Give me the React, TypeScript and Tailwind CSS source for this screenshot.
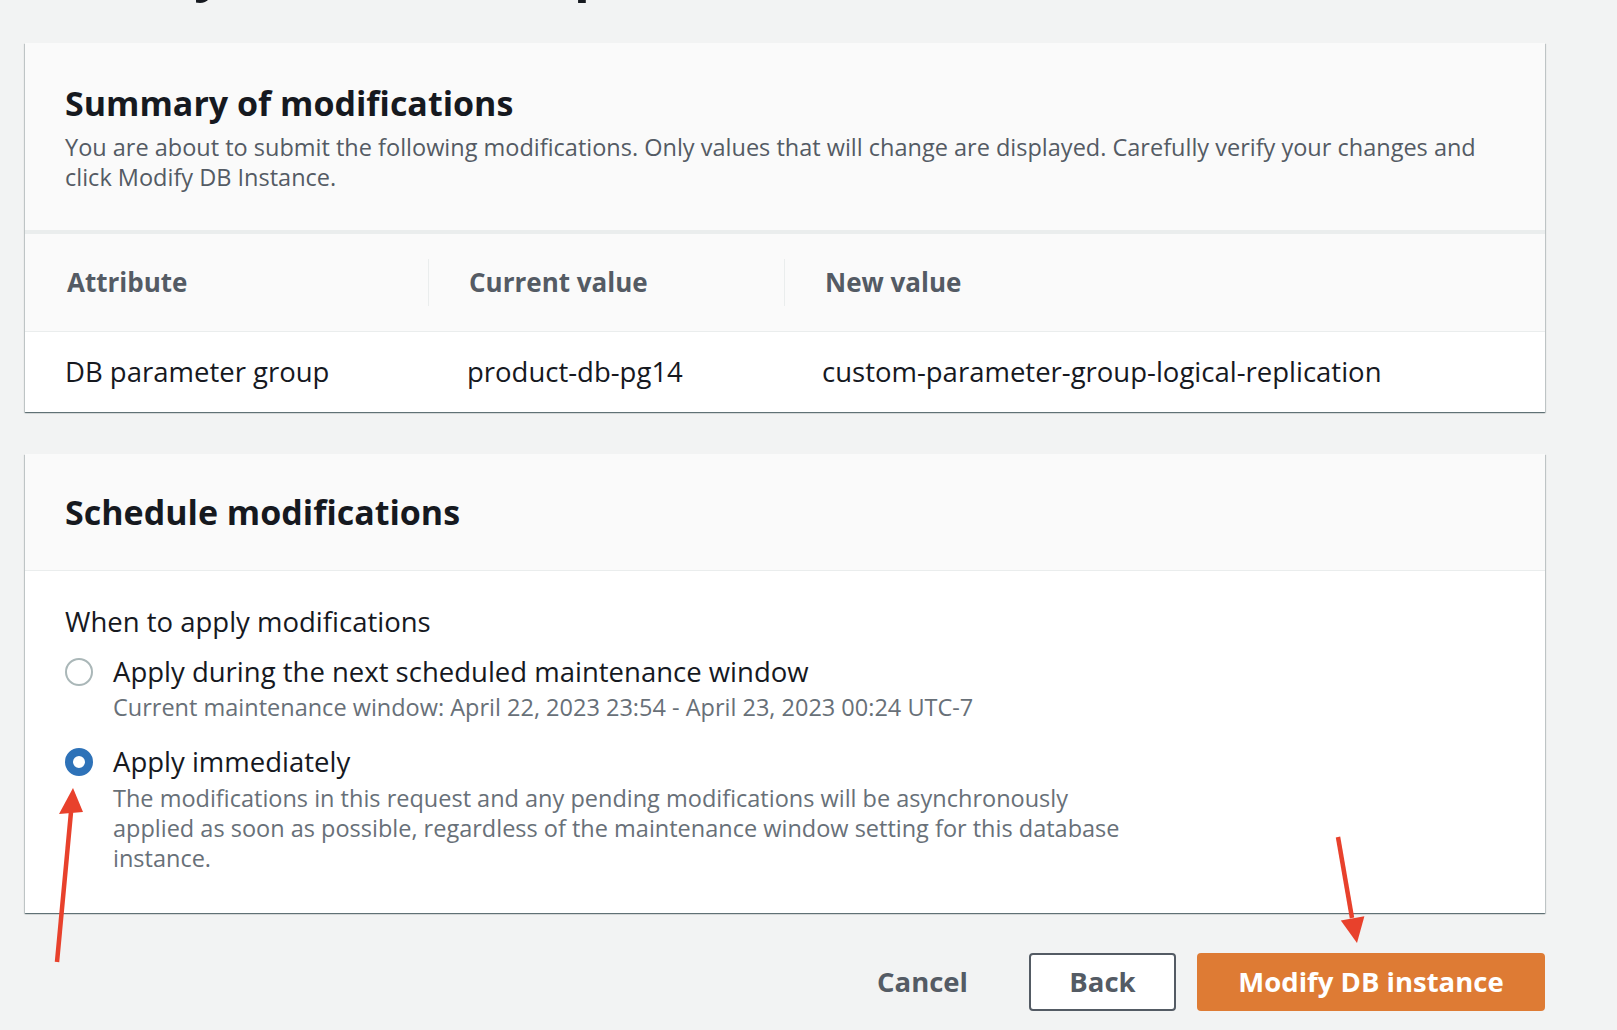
import React from "react";

const cardShadow =
  "shadow-[0_1px_1px_0_rgba(0,28,36,0.45),1px_1px_1px_0_rgba(0,28,36,0.15),-1px_1px_1px_0_rgba(0,28,36,0.15)]";

export default function App() {
  return (
    <div className="relative w-[1617px] h-[1030px] overflow-hidden bg-[#f2f3f3] font-['Open_Sans',sans-serif] text-[#16191f]">
      <div className="pl-[25px] pr-[72px]">
        <h1 className="-mt-[58px] h-[56px] text-[52px] leading-[56px] font-bold text-[#16191f] pl-[19px] whitespace-nowrap">
          Modify DB instance: product-db
        </h1>

        {/* Summary card */}
        <div className={`mt-[45px] bg-white ${cardShadow}`}>
          <div className="h-[191px] bg-[#fafafa] border-b-[4px] border-[#eaeded] px-[40px] pt-[38px]">
            <h2 className="text-[34px] leading-[44px] font-bold text-[#16191f]">Summary of modifications</h2>
            <p className="mt-[7px] text-[23.5px] leading-[30px] text-[#545b64] whitespace-nowrap">
              You are about to submit the following modifications. Only values that will change are displayed. Carefully verify your changes and
              <br />
              click Modify DB Instance.
            </p>
          </div>
          <div className="grid grid-cols-[403px_356px_1fr]">
            <div className="h-[98px] bg-[#fafafa] border-b border-[#eaeded] flex items-center pl-[42px] text-[26px] font-bold text-[#545b64]">
              Attribute
            </div>
            <div className="h-[98px] bg-[#fafafa] border-b border-[#eaeded] flex items-center">
              <div className="w-px h-[47px] bg-[#eaeded]" />
              <span className="pl-[40px] text-[26px] font-bold text-[#545b64]">Current value</span>
            </div>
            <div className="h-[98px] bg-[#fafafa] border-b border-[#eaeded] flex items-center">
              <div className="w-px h-[47px] bg-[#eaeded]" />
              <span className="pl-[40px] text-[26px] font-bold text-[#545b64]">New value</span>
            </div>
            <div className="h-[80px] flex items-center pl-[40px] text-[27.5px]">DB parameter group</div>
            <div className="h-[80px] flex items-center pl-[39px] text-[27.5px]">product-db-pg14</div>
            <div className="h-[80px] flex items-center pl-[38px] text-[27.5px]">custom-parameter-group-logical-replication</div>
          </div>
        </div>

        {/* Schedule card */}
        <div className={`mt-[42px] bg-white ${cardShadow}`}>
          <div className="h-[117px] bg-[#fafafa] border-b border-[#eaeded] px-[40px] flex items-center">
            <h2 className="text-[34px] leading-[44px] font-bold text-[#16191f]">Schedule modifications</h2>
          </div>
          <div className="px-[40px] pt-[33px] pb-[40px]">
            <div className="text-[27.5px] leading-[36px]">When to apply modifications</div>
            <div className="mt-[14px] flex items-center gap-[20px] h-[36px]">
              <span className="w-[28px] h-[28px] rounded-full border-[2.5px] border-[#aab7b8] bg-white shrink-0" />
              <span className="text-[27.5px] leading-[36px]">Apply during the next scheduled maintenance window</span>
            </div>
            <div className="mt-[2px] pl-[48px] text-[23.5px] leading-[30px] text-[#687078]">
              Current maintenance window: April 22, 2023 23:54 - April 23, 2023 00:24 UTC-7
            </div>
            <div className="mt-[22px] flex items-center gap-[20px] h-[36px]">
              <span className="w-[28px] h-[28px] rounded-full border-[8px] border-[#2e72b8] bg-white shrink-0" />
              <span className="text-[27.5px] leading-[36px]">Apply immediately</span>
            </div>
            <div className="mt-[3px] pl-[48px] text-[23.5px] leading-[30px] text-[#687078] whitespace-nowrap">
              The modifications in this request and any pending modifications will be asynchronously
              <br />
              applied as soon as possible, regardless of the maintenance window setting for this database
              <br />
              instance.
            </div>
          </div>
        </div>

        {/* Buttons */}
        <div className="mt-[40px] flex items-center justify-end">
          <button className="h-[58px] px-[40px] text-[27.5px] font-bold text-[#545b64]">Cancel</button>
          <button className="ml-[21px] h-[58px] w-[147px] rounded-[4px] border-2 border-[#545b64] bg-white text-[27.5px] font-bold text-[#545b64]">
            Back
          </button>
          <button className="ml-[21px] h-[58px] w-[348px] rounded-[4px] bg-[#de7b34] text-[27.5px] font-bold text-white">
            Modify DB instance
          </button>
        </div>
      </div>

      {/* Annotation arrows */}
      <svg className="absolute inset-0 pointer-events-none" width="1617" height="1030" viewBox="0 0 1617 1030">
        <line x1="57" y1="962" x2="71" y2="812" stroke="#e8412c" strokeWidth="4.5" />
        <polygon points="73,788 59,814 83,812" fill="#e8412c" />
        <line x1="1338" y1="837" x2="1352" y2="918" stroke="#e8412c" strokeWidth="4.5" />
        <polygon points="1357,943 1340.8,920.5 1364.4,916.3" fill="#e8412c" />
      </svg>
    </div>
  );
}
